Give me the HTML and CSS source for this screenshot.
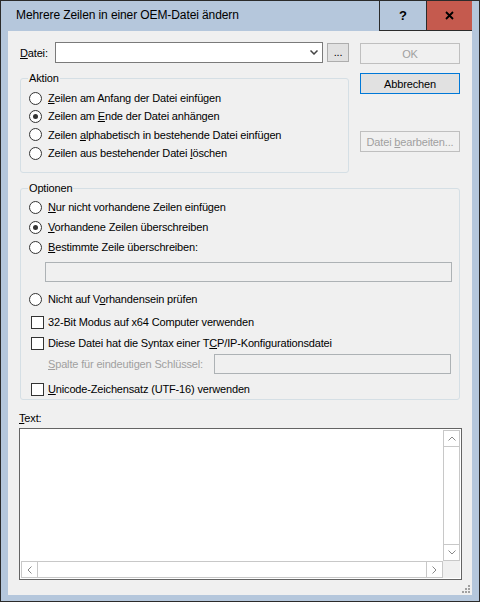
FILE: index.html
```html
<!DOCTYPE html>
<html>
<head>
    <title>Mehrere Zeilen in einer OEM-Datei ändern</title>
    <link rel="stylesheet" href="styles.css">
</head>
<body>
<div class="window">
    <div class="titlebar">
        <span class="title">Mehrere Zeilen in einer OEM-Datei ändern</span>
        <div class="caption-btn help">?</div>
        <div class="caption-btn close">
            <svg width="9" height="9" viewBox="0 0 9 9"><path d="M1 1 L8 8 M8 1 L1 8" stroke="#000" stroke-width="1.8"/></svg>
        </div>
    </div>

    <div class="client">
        <div class="top">
            <div class="left">
                <div class="file-row">
                    <span class="file-label"><u>D</u>atei:</span>
                    <div class="combo">
                        <svg width="8" height="5" viewBox="0 0 8 5"><path d="M0.5 0.5 L4 4 L7.5 0.5" fill="none" stroke="#444" stroke-width="1.5"/></svg>
                    </div>
                    <div class="btn browse">...</div>
                </div>

                <fieldset class="group action">
                    <legend>Aktion</legend>
                    <div class="opt"><span class="radio"></span><span><u>Z</u>eilen am Anfang der Datei einfügen</span></div>
                    <div class="opt"><span class="radio checked"></span><span>Zeilen am <u>E</u>nde der Datei anhängen</span></div>
                    <div class="opt"><span class="radio"></span><span>Zeilen <u>a</u>lphabetisch in bestehende Datei einfügen</span></div>
                    <div class="opt"><span class="radio"></span><span>Zeilen aus bestehender Datei <u>l</u>öschen</span></div>
                </fieldset>
            </div>

            <div class="buttons">
                <div class="btn push disabled">OK</div>
                <div class="btn push default">Abbrechen</div>
                <div class="btn push disabled edit"><span>Datei <u>b</u>earbeiten...</span></div>
            </div>
        </div>

        <fieldset class="group options">
            <legend>Optionen</legend>
            <div class="opt tall"><span class="radio"></span><span><u>N</u>ur nicht vorhandene Zeilen einfügen</span></div>
            <div class="opt tall"><span class="radio checked"></span><span><u>V</u>orhandene Zeilen überschreiben</span></div>
            <div class="opt tall"><span class="radio"></span><span><u>B</u>estimmte Zeile überschreiben:</span></div>
            <div class="field line-field"></div>
            <div class="opt tall after-field"><span class="radio"></span><span>Nicht auf V<u>o</u>rhandensein prüfen</span></div>
            <div class="opt tall cb-first"><span class="check"></span><span>32-Bit Modus auf x64 Computer verwenden</span></div>
            <div class="opt tall cb-next"><span class="check"></span><span>Diese Datei hat die Syntax einer T<u>C</u>P/IP-Konfigurationsdatei</span></div>
            <div class="key-row">
                <span class="key-label"><u>S</u>palte für eindeutigen Schlüssel:</span>
                <div class="field key-field"></div>
            </div>
            <div class="opt cb-last"><span class="check"></span><span><u>U</u>nicode-Zeichensatz (UTF-16) verwenden</span></div>
        </fieldset>

        <div class="text-label"><u>T</u>ext:</div>
        <div class="textbox">
            <div class="text-area"></div>
            <div class="vscroll">
                <div class="sb-btn">
                    <svg width="8" height="5" viewBox="0 0 8 5"><path d="M0.5 4.5 L4 1 L7.5 4.5" fill="none" stroke="#888" stroke-width="1"/></svg>
                </div>
                <div class="sb-track"></div>
                <div class="sb-btn">
                    <svg width="8" height="5" viewBox="0 0 8 5"><path d="M0.5 0.5 L4 4 L7.5 0.5" fill="none" stroke="#888" stroke-width="1"/></svg>
                </div>
            </div>
            <div class="hscroll">
                <div class="sb-btn">
                    <svg width="5" height="8" viewBox="0 0 5 8"><path d="M4.5 0.5 L1 4 L4.5 7.5" fill="none" stroke="#888" stroke-width="1"/></svg>
                </div>
                <div class="sb-track"></div>
                <div class="sb-btn">
                    <svg width="5" height="8" viewBox="0 0 5 8"><path d="M0.5 0.5 L4 4 L0.5 7.5" fill="none" stroke="#888" stroke-width="1"/></svg>
                </div>
            </div>
            <div class="sb-corner"></div>
        </div>

        <!-- size grip in the lower right corner -->
        <svg class="grip" width="9" height="9" viewBox="0 0 9 9">
            <rect x="7" y="1" width="2" height="2" fill="#a0a0a0"/>
            <rect x="4" y="4" width="2" height="2" fill="#a0a0a0"/>
            <rect x="7" y="4" width="2" height="2" fill="#a0a0a0"/>
            <rect x="1" y="7" width="2" height="2" fill="#a0a0a0"/>
            <rect x="4" y="7" width="2" height="2" fill="#a0a0a0"/>
            <rect x="7" y="7" width="2" height="2" fill="#a0a0a0"/>
        </svg>
    </div>
</div>
</body>
</html>
```

FILE: styles.css
```css
body {
    margin: 0;
    font-family: "Liberation Sans", Arial, sans-serif;
    font-size: 11px;
    letter-spacing: -0.16px;
    color: #000;
}
u {
    text-decoration: underline;
}
.window {
    width: 480px;
    height: 602px;
    box-sizing: border-box;
    border: 1px solid #2b2b2b;
    background: #b5c7dc;
    padding: 0 7px 6px 7px;
}
.titlebar {
    height: 30px;
    display: flex;
    align-items: stretch;
}
.title {
    flex: 1;
    padding-left: 8px;
    line-height: 29px;
    font-size: 12px;
    letter-spacing: -0.1px;
}
.caption-btn {
    width: 46px;
    border-left: 1px solid #2b2b2b;
    border-bottom: 1px solid #2b2b2b;
    display: flex;
    align-items: center;
    justify-content: center;
    font-weight: bold;
    font-size: 13px;
}
.close {
    background: #c55a4e;
    width: 45px;
}
.client {
    position: relative;
    height: 564px;
    background: #f0f0f0;
    padding: 11px 0 0 11px;
    box-sizing: border-box;
}
.top {
    display: flex;
    gap: 11px;
    padding-left: 1px;
}
.left {
    width: 329px;
}
.file-row {
    display: flex;
    align-items: center;
    height: 21px;
}
.file-label {
    width: 35px;
}
.combo {
    width: 268px;
    height: 21px;
    box-sizing: border-box;
    border: 1px solid #7a7a7a;
    background: #fff;
    display: flex;
    align-items: center;
    justify-content: flex-end;
    padding-right: 4px;
}
.btn {
    box-sizing: border-box;
    border: 1px solid #adadad;
    background: #e1e1e1;
    display: flex;
    align-items: center;
    justify-content: center;
}
.browse {
    width: 22px;
    height: 19px;
    margin-left: 4px;
    align-items: flex-end;
    padding-bottom: 3px;
}
.buttons {
    width: 100px;
    padding-top: 1px;
    display: flex;
    flex-direction: column;
}
.push {
    height: 21px;
}
.push.default {
    border-color: #0078d7;
    margin-top: 9px;
}
.push.disabled {
    background: #f0f0f0;
    border-color: #bfbfbf;
    color: #a0a0a0;
}
.push.edit {
    margin-top: 37px;
}
.group {
    margin: 0;
    border: 1px solid #d5dfe5;
    border-radius: 3px;
    padding: 4px 7px 10px 8px;
}
.group legend {
    padding: 0 1px;
    margin-left: -1px;
    line-height: 13px;
}
.action {
    margin-top: 9px;
    width: 329px;
    box-sizing: border-box;
}
.opt {
    display: flex;
    align-items: center;
    height: 18px;
}
.action .opt + .opt {
    margin-top: 0.4px;
}
.opt.tall {
    height: 20px;
}
.radio {
    width: 13px;
    height: 13px;
    box-sizing: border-box;
    border: 1px solid #333;
    border-radius: 50%;
    background: #fff;
    margin-right: 6px;
    display: flex;
    align-items: center;
    justify-content: center;
}
.radio.checked::after {
    content: "";
    width: 5px;
    height: 5px;
    border-radius: 50%;
    background: #333;
}
.check {
    width: 13px;
    height: 13px;
    box-sizing: border-box;
    border: 1px solid #333;
    background: #fff;
    margin-left: 2px;
    margin-right: 4px;
}
.options {
    width: 440px;
    box-sizing: border-box;
    margin: 9px 0 0 1px;
    padding-top: 2px;
    padding-bottom: 1px;
}
.field {
    height: 20px;
    box-sizing: border-box;
    border: 1px solid #adb2b5;
    background: #f0f0f0;
}
.line-field {
    margin: 5px 0 0 16px;
}
.after-field {
    margin-top: 7px;
}
.cb-first {
    margin-top: 3px;
}
.cb-next {
    margin-top: 1px;
}
.key-row {
    display: flex;
    align-items: center;
    margin-top: 1px;
}
.key-label {
    width: 166px;
    margin-left: 19px;
    color: #a0a0a0;
}
.key-field {
    flex: 1;
    margin-right: 1px;
}
.cb-last {
    margin-top: 6px;
}
.text-label {
    margin-top: 12px;
    line-height: 13px;
}
.textbox {
    margin-top: 3px;
    width: 443px;
    height: 152px;
    box-sizing: border-box;
    border: 1px solid #646464;
    background: #fff;
    padding: 1px;
    display: grid;
    grid-template-columns: 1fr 17px;
    grid-template-rows: 1fr 17px;
}
.vscroll {
    display: flex;
    flex-direction: column;
    border: 1px solid #c8c8c8;
}
.hscroll {
    display: flex;
    border: 1px solid #c8c8c8;
}
.sb-btn {
    width: 15px;
    height: 15px;
    display: flex;
    align-items: center;
    justify-content: center;
}
.vscroll .sb-track {
    flex: 1;
    border-top: 1px solid #c8c8c8;
    border-bottom: 1px solid #c8c8c8;
}
.hscroll .sb-track {
    flex: 1;
    border-left: 1px solid #c8c8c8;
    border-right: 1px solid #c8c8c8;
}
.sb-corner {
    background: #f0f0f0;
}
.grip {
    position: absolute;
    right: 2px;
    bottom: 2px;
}
```
